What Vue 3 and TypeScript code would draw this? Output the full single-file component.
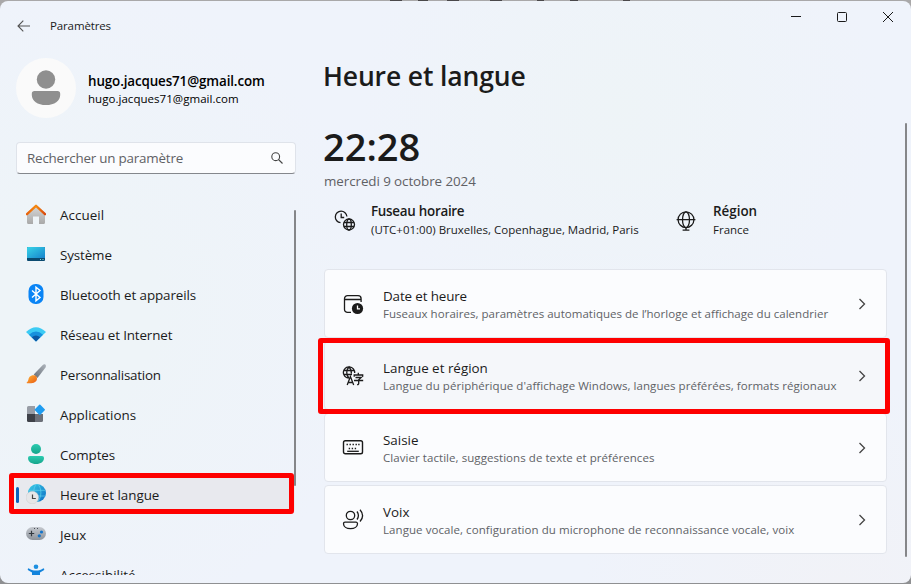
<script setup lang="ts">
interface NavItem {
  id: string
  label: string
  active?: boolean
  track: number
}
interface Card {
  id: string
  title: string
  text: string
  marked?: boolean
  titleTrack: number
  textTrack: number
}

const navItems: NavItem[] = [
  { id: 'home', label: 'Accueil', track: 0.05 },
  { id: 'system', label: 'Système', track: -0.12 },
  { id: 'bluetooth', label: 'Bluetooth et appareils', track: -0.1 },
  { id: 'network', label: 'Réseau et Internet', track: -0.14 },
  { id: 'brush', label: 'Personnalisation', track: -0.22 },
  { id: 'apps', label: 'Applications', track: -0.02 },
  { id: 'accounts', label: 'Comptes', track: -0.1 },
  { id: 'time', label: 'Heure et langue', active: true, track: -0.04 },
  { id: 'games', label: 'Jeux', track: 0 },
  { id: 'access', label: 'Accessibilité', track: 0 },
]

const cards: Card[] = [
  { id: 'date', title: 'Date et heure', text: 'Fuseaux horaires, paramètres automatiques de l’horloge et affichage du calendrier', titleTrack: -0.13, textTrack: 0.03 },
  { id: 'lang', title: 'Langue et région', text: "Langue du périphérique d'affichage Windows, langues préférées, formats régionaux", marked: true, titleTrack: 0, textTrack: 0.055 },
  { id: 'keyboard', title: 'Saisie', text: 'Clavier tactile, suggestions de texte et préférences', titleTrack: 0, textTrack: 0.06 },
  { id: 'voice', title: 'Voix', text: 'Langue vocale, configuration du microphone de reconnaissance vocale, voix', titleTrack: 0, textTrack: 0.07 },
]
</script>

<template>
  <div class="desktop">
    <div class="window">
      <header class="titlebar">
        <svg class="back" width="14" height="14" viewBox="0 0 14 14" fill="none" stroke="#555" stroke-width="1.1"><path d="M13 7H1.3M6.3 1.7L1 7l5.3 5.3" /></svg>
        <span class="app-name">Paramètres</span>
        <div class="controls">
          <svg width="12" height="12" viewBox="0 0 12 12" fill="none" stroke="#1a1a1a"><path d="M1 5.5h10" /></svg>
          <svg width="12" height="12" viewBox="0 0 12 12" fill="none" stroke="#1a1a1a"><rect x="1.5" y="1.5" width="9" height="9" rx="1" /></svg>
          <svg width="12" height="12" viewBox="0 0 12 12" fill="none" stroke="#1a1a1a"><path d="M1 1l10 10M11 1L1 11" /></svg>
        </div>
      </header>

      <div class="body">
        <aside class="sidebar">
          <div class="profile">
            <svg class="avatar" width="60" height="60" viewBox="0 0 60 60"><circle cx="30" cy="30" r="30" fill="#fafafa" /><circle cx="30" cy="21.5" r="9.2" fill="#8f8f8f" /><path d="M18.5 33h23a2.7 2.7 0 0 1 2.7 2.7v1.2C44.2 42.5 38.5 47 30 47s-14.2-4.5-14.2-10.1v-1.2A2.7 2.7 0 0 1 18.500 33z" fill="#8f8f8f" /></svg>
            <div class="identity">
              <strong class="name">hugo.jacques71@gmail.com</strong>
              <span class="mail">hugo.jacques71@gmail.com</span>
            </div>
          </div>

          <div class="search">
            <span class="placeholder">Rechercher un paramètre</span>
            <svg width="12" height="12" viewBox="0 0 12 12" fill="none" stroke="#444" stroke-width="1.1"><circle cx="4.7" cy="4.7" r="3.9" /><path d="M7.5 7.5L11.5 11.5" /></svg>
          </div>

          <div class="nav-wrap">
            <nav class="nav">
              <a v-for="item in navItems" :key="item.id" class="nav-item" :class="{ active: item.active }">
                <svg class="nav-icon" width="20" height="20" viewBox="0 0 20 20">
                  <template v-if="item.id === 'home'">
                    <defs>
                      <linearGradient id="wall" x1="0" y1="0" x2="0" y2="1"><stop offset="0" stop-color="#d8d8d8" /><stop offset="1" stop-color="#a9a9a9" /></linearGradient>
                      <linearGradient id="roof" x1="0" y1="0" x2="1" y2="0"><stop offset="0" stop-color="#e8620c" /><stop offset=".5" stop-color="#f58a10" /><stop offset="1" stop-color="#d9480c" /></linearGradient>
                    </defs>
                    <path d="M1 9L10 1.5 19 9v9.5a1.5 1.5 0 0 1-1.5 1.5H13v-7.500H7V20H2.500A1.500 1.500 0 0 1 1 18.500z" fill="url(#wall)" />
                    <path d="M1 10.200L10 1.800l9 8.400" fill="none" stroke="url(#roof)" stroke-width="2.300" stroke-linecap="round" stroke-linejoin="round" />
                  </template>
                  <template v-else-if="item.id === 'system'">
                    <defs><linearGradient id="screen" x1="0" y1="0" x2="1" y2="1"><stop offset="0" stop-color="#38d4e8" /><stop offset="1" stop-color="#1683cc" /></linearGradient></defs>
                    <rect x="1" y="3" width="18" height="14" rx="1" fill="#0b4a70" />
                    <path d="M1 4a1 1 0 0 1 1-1h16a1 1 0 0 1 1 1v10H1z" fill="url(#screen)" />
                    <path d="M14 15.500h1M16.500 15.500h1" stroke="#8dd" />
                  </template>
                  <template v-else-if="item.id === 'bluetooth'">
                    <rect x="2.500" y="0" width="15" height="20" rx="7" fill="#0a84f5" />
                    <path d="M6 6.500l8 7-4 3.200V3.300l4 3.200-8 7" fill="none" stroke="#fff" stroke-width="1.400" />
                  </template>
                  <template v-else-if="item.id === 'network'">
                    <path d="M0 8Q10-1.500 20 8L10 17.500z" fill="#3ccbf4" />
                    <path d="M3 10.800Q10 4 17 10.800L10 17.500z" fill="#1790dd" />
                    <path d="M5.800 13.300Q10 9.500 14.200 13.300L10 17.500z" fill="#0b57a4" />
                  </template>
                  <template v-else-if="item.id === 'brush'">
                    <defs>
                      <linearGradient id="handle" x1="1" y1="0" x2="0" y2="1"><stop offset="0" stop-color="#aeb5bd" /><stop offset="1" stop-color="#666d76" /></linearGradient>
                      <linearGradient id="bristle" x1="0" y1="0" x2="1" y2="1"><stop offset="0" stop-color="#ffb436" /><stop offset="1" stop-color="#e95a12" /></linearGradient>
                    </defs>
                    <path d="M19.300.6c.9.8.8 1.900.2 2.800L11.500 14 7.700 10.500 16.800 1c.8-.8 1.800-1 2.500-.4z" fill="url(#handle)" />
                    <path d="M8 11.200c1.900.2 3.100 1.600 3 3.500-.2 3.200-3.500 5.200-10 4.500-.5 0-.5-.8 0-1 1.600-.7 1-3.500 2.600-5.400 1.100-1.300 2.800-1.800 4.400-1.600z" fill="url(#bristle)" />
                  </template>
                  <template v-else-if="item.id === 'apps'">
                    <path d="M1 3.500A1.500 1.500 0 0 1 2.500 2H9v8H1z" fill="#989da6" /><path d="M1 10h8v8H2.500A1.500 1.500 0 0 1 1 16.500z" fill="#3e4148" /><path d="M9 10h8v6.500a1.500 1.500 0 0 1-1.500 1.500H9z" fill="#6c7079" />
                    <rect x="9.900" y="1.800" width="7.800" height="7.800" rx=".8" transform="rotate(45 13.800 5.700)" fill="#1f9cf0" />
                  </template>
                  <template v-else-if="item.id === 'accounts'">
                    <defs><linearGradient id="person" x1="0" y1="0" x2="0" y2="1"><stop offset="0" stop-color="#2ccbb0" /><stop offset="1" stop-color="#16a58c" /></linearGradient></defs>
                    <circle cx="10" cy="5" r="5" fill="url(#person)" /><path d="M4 12h12a2 2 0 0 1 2 2c0 3.800-3.400 6-8 6s-8-2.200-8-6a2 2 0 0 1 2-2z" fill="url(#person)" />
                  </template>
                  <template v-else-if="item.id === 'time'">
                    <defs><linearGradient id="earth" x1="0" y1="0" x2="1" y2="1"><stop offset="0" stop-color="#3ccfe8" /><stop offset="1" stop-color="#0c6cc4" /></linearGradient></defs>
                    <circle cx="11" cy="9" r="9" fill="url(#earth)" />
                    <path d="M3 6.300h16.200M6 12h13.300M10.500 0C6.500 4 7 13 10.500 18M11.500 0c4.500 4 4.500 13 0 18" fill="none" stroke="#5fd2ee" stroke-width=".7" />
                    <circle cx="6.300" cy="13.500" r="6.300" fill="#e6e6e8" stroke="#c4c6ca" stroke-width=".4" /><path d="M6.500 10.500v4h3.300" fill="none" stroke="#444" stroke-width="1.200" />
                  </template>
                  <template v-else-if="item.id === 'games'">
                    <defs><linearGradient id="pad" x1="0" y1="0" x2="0" y2="1"><stop offset="0" stop-color="#c4c8ce" /><stop offset="1" stop-color="#8d939b" /></linearGradient></defs>
                    <rect x="0" y="3" width="20" height="13" rx="6.500" fill="url(#pad)" />
                    <path d="M2.800 9.500h5.400M5.500 6.800v5.400" stroke="#333940" stroke-width="1.200" /><circle cx="15.500" cy="8" r="1.600" fill="#1374ca" /><circle cx="13.300" cy="11.800" r="1.600" fill="#1374ca" />
                    <path d="M8 4.500h1M11 4.500h1" stroke="#4a4f57" />
                  </template>
                  <template v-else>
                    <circle cx="10" cy="2.800" r="2.300" fill="#1d8fe0" />
                    <path d="M2.600 4.200c2 1.400 4.400 2.300 7.400 2.300s5.400-.9 7.400-2.300c1 .2 1.200 1.400.4 2L14 8.500v4l2 7H4l2-7v-4L2.200 6.200c-.8-.6-.6-1.800.4-2z" fill="#1484dc" />
                  </template>
                </svg>
                <span class="nav-label" :style="{ letterSpacing: item.track + 'px' }">{{ item.label }}</span>
              </a>
            </nav>
            <div class="nav-scroll"></div>
            <div class="mark mark-nav"></div>
          </div>
        </aside>

        <main class="main">
          <h1 class="title">Heure et langue</h1>
          <div class="clock">22:28</div>
          <div class="date">mercredi 9 octobre 2024</div>

          <div class="facts">
            <div class="fact">
              <svg width="22" height="22" viewBox="0 0 22 22" fill="none" stroke="#1b1b1b" stroke-width="1.300">
                <path d="M6.500 12.700A5.800 5.800 0 1 1 12.900 6.500M7.200 3.500v4h3" />
                <circle cx="15" cy="14.500" r="5.500" /><ellipse cx="15" cy="14.500" rx="2.300" ry="5.500" /><path d="M10 12.500h10M10 16.500h10" />
              </svg>
              <div class="fact-text"><strong class="tz-title">Fuseau horaire</strong><span>(UTC+01:00) Bruxelles, Copenhague, Madrid, Paris</span></div>
            </div>
            <div class="fact region">
              <svg width="22" height="22" viewBox="0 0 22 22" fill="none" stroke="#1b1b1b" stroke-width="1.300">
                <circle cx="11" cy="9.700" r="7.900" /><ellipse cx="11" cy="9.700" rx="3.500" ry="7.900" /><path d="M1.600 9.700h18.800M11 17.500v2.500M7.600 20.200h6.800" />
              </svg>
              <div class="fact-text"><strong>Région</strong><span>France</span></div>
            </div>
          </div>

          <section class="cards">
            <article v-for="card in cards" :key="card.id" class="card" :class="{ hover: card.marked }">
              <svg class="card-icon" width="22" height="22" viewBox="0 0 22 22" fill="none" stroke="#1b1b1b" stroke-width="1.300">
                <template v-if="card.id === 'date'">
                  <path d="M9 19.400H5.500a3 3 0 0 1-3-3V5.700a3 3 0 0 1 3-3h10.600a3 3 0 0 1 3 3V9M2.500 6.500h16.600" />
                  <circle cx="15.500" cy="15.500" r="5.600" fill="#1b1b1b" stroke="none" /><path d="M15.500 12.500v3.300H18" stroke="#fff" />
                </template>
                <template v-else-if="card.id === 'lang'">
                  <path d="M6.500 13.200A5.700 5.700 0 1 1 12.700 8M1.500 5.500h11M1.500 9.500h8.500M7 13.200C4 10 4 5 7 1.800c1.800 2 2.500 4.200 2.400 6.700" />
                  <path d="M5.200 20L8.400 11.500l3.300 8.500M6.400 17.500h4.200" />
                  <path d="M16.300 7.800v2M12.200 11.700V10h8.500v1.700M13.500 12.500h5.700l-2.500 2.300v3.700q0 1.200-1.600 1M12 15.500h9.200" />
                </template>
                <template v-else-if="card.id === 'keyboard'">
                  <rect x="1.500" y="3.800" width="19" height="13" rx="1.800" stroke-width="1.400" />
                  <path d="M4.500 7.500h1.400m1.600 0h1.400m1.600 0h1.400m1.600 0h1.400m1.300 0h1.400M6.700 11.500h1.400m1.600 0h1.400m1.600 0h1.400" stroke-width="1.400" /><path d="M5.200 14.300h11.600" />
                </template>
                <template v-else>
                  <circle cx="8.500" cy="6.500" r="4.200" /><path d="M3 13.200h11a1.500 1.500 0 0 1 1.500 1.500c0 2.800-2.900 4.900-7 4.900s-7-2.100-7-4.900A1.500 1.500 0 0 1 3 13.200zM15 2.500c1.700 2.400 1.700 5.600 0 8M18 .8c3.200 3.600 3.200 8.100 0 11.700" />
                </template>
              </svg>
              <div class="card-text">
                <span class="card-title" :style="{ letterSpacing: card.titleTrack + 'px' }">{{ card.title }}</span>
                <span class="card-desc" :style="{ letterSpacing: card.textTrack + 'px' }">{{ card.text }}</span>
              </div>
              <svg class="chevron" width="12" height="12" viewBox="0 0 12 12" fill="none" stroke="#444" stroke-width="1.300"><path d="M3.500 1l5 5-5 5" /></svg>
            </article>
            <div class="mark mark-card"></div>
          </section>
        </main>
      </div>
      <div class="main-scroll"></div>
    </div>
  </div>
</template>

<style>
body { margin: 0; overflow: hidden; }
</style>

<style scoped>
.desktop {
  width: 911px; height: 584px; box-sizing: border-box; padding: 1px 0;
  background:
    linear-gradient(90deg, transparent 390px, #4a484a 390px 402px, transparent 402px 418px, #4a484a 418px 428px, transparent 428px 447px, #4a484a 447px 459px, transparent 459px 490px, #4a484a 490px 502px, transparent 502px 537px, #4a484a 537px 544px, transparent 544px 570px, #4a484a 570px 578px, transparent 578px 623px, #4a484a 623px 630px, transparent 630px) top / 100% 1px no-repeat,
    linear-gradient(#a9a8a9 50%, #8f9092 50%);
  font-family: "Open Sans", "Noto Sans", sans-serif; color: #1b1b1b;
}
.window {
  position: relative; height: 582px; overflow: hidden; border-radius: 8px;
  display: flex; flex-direction: column;
  background:
    radial-gradient(ellipse 320px 330px at 60px 310px, #eef4f8 30%, #eef4f800 100%),
    radial-gradient(ellipse 260px 260px at 620px 110px, #eef4f7, #eef4f700 100%),
    radial-gradient(ellipse 260px 200px at 840px 582px, #f1f2f7, #f1f2f700 100%),
    #eff3fb;
}
.titlebar { height: 48px; display: flex; align-items: center; flex: none; padding: 2px 16px 0; box-sizing: border-box; }
.back { margin-left: 1px; }
.app-name { margin-left: 19px; font-size: 11.5px; letter-spacing: -0.13px; line-height: 16px; }
.controls { margin-left: auto; display: flex; gap: 34px; align-self: flex-start; padding-top: 8px; padding-right: 1px; }
.body { flex: 1; min-height: 0; display: grid; grid-template-columns: 307px 1fr; }
.sidebar { padding: 9px 11px 0 16px; display: flex; flex-direction: column; min-height: 0; }
.profile { display: flex; align-items: center; gap: 12px; height: 60px; }
.identity { display: flex; flex-direction: column; padding-top: 2px; }
.name { font-size: 13.4px; font-weight: 600; line-height: 19px; letter-spacing: -0.12px; color: #000; white-space: nowrap; }
.mail { font-size: 11.5px; line-height: 16px; letter-spacing: 0.04px; color: #000; }
.search {
  margin-top: 24px; height: 32px; width: 280px; box-sizing: border-box; flex: none;
  border: 1px solid #dfe3ea; border-bottom-color: #84878c; border-radius: 4px; background: #fbfcfe;
  display: flex; align-items: center; justify-content: space-between; padding: 0 12px 0 10px;
}
.placeholder { font-size: 13.4px; letter-spacing: -0.2px; color: #5f6165; white-space: nowrap; }
.nav-wrap { position: relative; flex: none; margin-top: 23px; height: 378px; }
.nav { height: 378px; overflow: hidden; display: flex; flex-direction: column; gap: 4px; }
.nav-item { height: 36px; flex: none; width: 279px; box-sizing: border-box; display: flex; align-items: center; padding-left: 10px; border-radius: 4px; }
.nav-item.active { background: #e8e9ee; position: relative; }
.nav-item.active::before { content: ""; position: absolute; left: 0; top: 10px; width: 3px; height: 16px; border-radius: 2px; background: #0d63bd; }
.nav-icon { flex: none; margin-top: -2px; }
.nav-label { margin-left: 14px; font-size: 13.4px; line-height: 20px; white-space: nowrap; }
.nav-scroll { position: absolute; left: 278px; top: 13px; width: 2px; height: 276px; border-radius: 1px; background: #858689; }
.mark { position: absolute; box-sizing: border-box; border: 5px solid #fe0000; border-radius: 3px; }
.mark-nav { left: -7px; top: 276px; width: 285px; height: 41px; }
.main { padding: 9px 24px 0 16px; display: flex; flex-direction: column; min-height: 0; }
.title { margin: 0; font-size: 26.5px; font-weight: 600; line-height: 36px; letter-spacing: -0.14px; white-space: nowrap; align-self: flex-start; }
.clock { margin-top: 27px; font-size: 38px; font-weight: 600; line-height: 50px; align-self: flex-start; }
.date { font-size: 13.4px; line-height: 20px; letter-spacing: -0.08px; margin-left: 1px; color: #5f6165; align-self: flex-start; }
.facts { display: flex; margin-top: 10px; height: 40px; }
.fact { display: flex; width: 341px; padding-left: 11px; gap: 15px; align-items: center; box-sizing: border-box; }
.fact.region { width: auto; gap: 16px; }
.fact-text { display: flex; flex-direction: column; white-space: nowrap; margin-top: -2px; }
.fact-text strong { font-size: 13.4px; font-weight: 600; line-height: 20px; }
.fact-text .tz-title { letter-spacing: -0.27px; }
.fact-text span { font-size: 11.5px; line-height: 18px; }
.cards { position: relative; margin: 28px 0 0 1px; display: flex; flex-direction: column; gap: 3px; width: 563px; }
.card {
  height: 69px; box-sizing: border-box; border: 1px solid #e2e5ec; border-radius: 4px; background: #fbfcfe;
  display: flex; align-items: center; padding: 0 18px 0 17px;
}
.card.hover { background: #f5f7fa; }
.card-icon { margin-top: 1px; }
.card-text { margin-left: 19px; padding-top: 2px; display: flex; flex-direction: column; white-space: nowrap; align-items: flex-start; }
.card-title { font-size: 13.4px; line-height: 19px; }
.card-desc { font-size: 11.5px; line-height: 16px; color: #606266; }
.chevron { margin-left: auto; margin-top: 1px; }
.mark-card { left: -6px; top: 69px; width: 572px; height: 76px; }
.main-scroll { position: absolute; left: 905px; top: 122px; width: 2px; height: 434px; border-radius: 1px; background: #858689; }
</style>
